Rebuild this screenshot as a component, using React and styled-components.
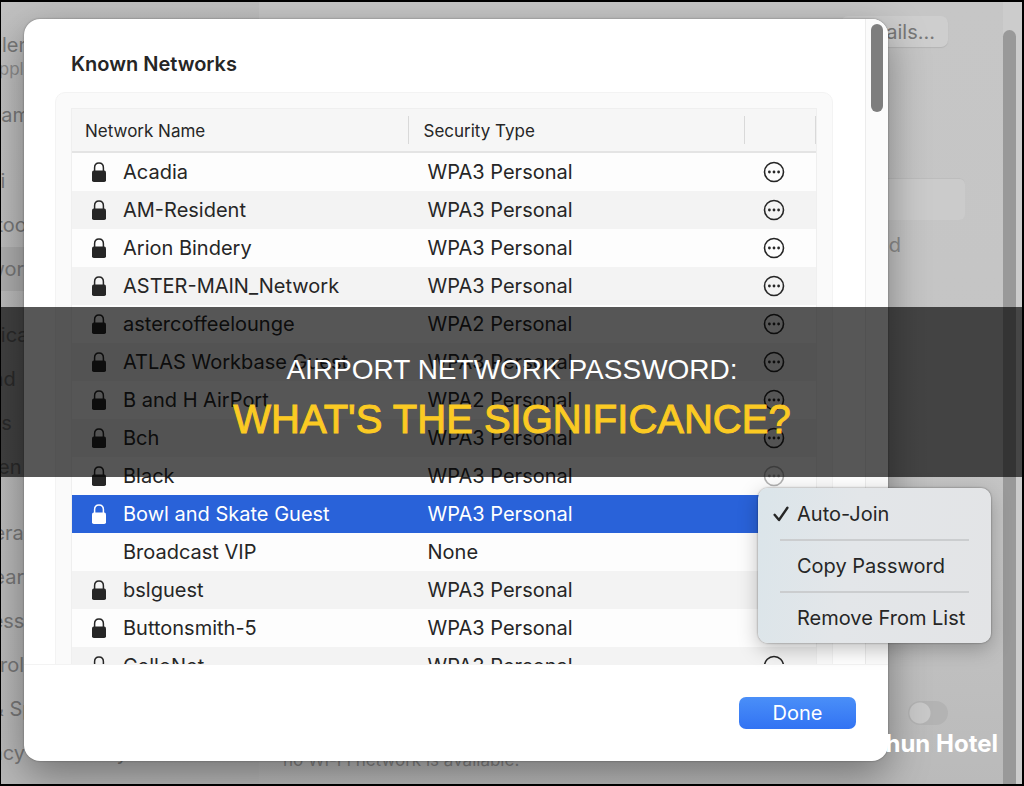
import React from "react";
import styled, { createGlobalStyle } from "styled-components";

const GlobalStyle = createGlobalStyle`
  * {
    box-sizing: border-box;
  }

  body {
    margin: 0;
    font-family: Inter, "Liberation Sans", sans-serif;
    color: #262626;
  }

  button {
    font: inherit;
    color: inherit;
    border: 0;
    padding: 0;
    background: none;
  }
`;

const Page = styled.div`
  position: relative;
  height: 100vh;
  min-height: 700px;
  overflow: hidden;
  border: 2px solid #000;
  border-width: 2px 2px 2px 1px;
  display: flex;
  background: linear-gradient(#c6c6c6, #c4c4c4 70%, #bababa);
  color: #787878;
`;

const Sidebar = styled.nav`
  width: 304px;
  margin-left: -46px;
  flex: none;
  display: flex;
  flex-direction: column;
  background: linear-gradient(#c0c0c0, #bababa 50%, #b8b8b8);
`;

const Account = styled.div`
  flex: none;
  height: 157px;
  padding: 30px 0 0 32px;
  font-size: 20px;
  line-height: 26px;

  small {
    display: block;
    font-size: 17px;
    line-height: 22px;
    color: #8c8c8c;
  }

  p {
    margin: 22px 0 0 3px;
  }
`;

const NavGroup = styled.div`
  flex: none;
  display: flex;
  flex-direction: column;
  margin-bottom: 22px;
`;

const NavLink = styled.a`
  height: 44px;
  line-height: 44px;
  font-size: 20px;
  color: inherit;
  text-decoration: none;
  white-space: nowrap;
  background: ${({ $active }) => ($active ? "#aeaeae" : "none")};
`;

const Settings = styled.main`
  flex: 1;
  display: flex;
  flex-direction: column;
  align-items: flex-end;
  padding: 14px 38px 12px 24px;
  font-size: 20px;
`;

const DetailsButton = styled.button`
  height: 31px;
  padding: 0 13px;
  border-radius: 7px;
  background: #cecece;
  box-shadow: 0 1px 1px #b4b4b4;
  margin-right: 17px;
`;

const NetworkField = styled.div`
  width: 100%;
  height: 42px;
  margin-top: 131px;
  border-radius: 6px;
  background: #cbcbcb;
  border-top: 1px solid #bdbdbd;
`;

const Hint = styled.p`
  margin: 12px 64px 0 0;
  line-height: 26px;
  color: #8c8c8c;
`;

const ToggleInput = styled.input`
  appearance: none;
  width: 40px;
  height: 24px;
  margin: auto 17px 0 0;
  border-radius: 12px;
  background: radial-gradient(circle at 12px 12px, #c9c9c9 10px, #b3b3b3 11px);
`;

const Status = styled.p`
  width: 100%;
  margin: 23px 0 0;
  font-size: 17px;
  line-height: 24px;
  color: #858585;
`;

const PageScroll = styled.div`
  width: 19px;
  flex: none;
  padding: 28px 6px 0 0;
  background: #cccccc;

  &::before {
    content: "";
    display: block;
    height: 100%;
    border-radius: 7px 7px 0 0;
    background: #999999;
  }
`;

const Sheet = styled.section`
  position: absolute;
  top: 17px;
  left: 23px;
  right: 134px;
  bottom: 23px;
  display: flex;
  flex-direction: column;
  border-radius: 16px;
  background: #fff;
  color: #262626;
  box-shadow: 0 0 2px rgba(0, 0, 0, 0.4), 0 14px 40px rgba(0, 0, 0, 0.38);
`;

const SheetBody = styled.div`
  flex: 1;
  min-height: 0;
  display: flex;
  overflow: hidden;
  border-radius: 16px 16px 0 0;
  border-bottom: 1px solid #f3f3f3;
`;

const SheetContent = styled.div`
  flex: 1;
  padding: 32px 32px 0 31px;
`;

const Heading = styled.h2`
  margin: 0 16px 15px;
  font-size: 20px;
  line-height: 26px;
  font-weight: 600;
`;

const Card = styled.div`
  padding: 16px;
  border: 1px solid #f3f3f3;
  border-radius: 10px;
  background: #fafafa;
`;

const Table = styled.table`
  width: 100%;
  table-layout: fixed;
  border-collapse: separate;
  border-spacing: 0;
  text-align: left;
  font-size: 20px;
  outline: 1px solid #efefef;
`;

const HeadCell = styled.th`
  width: ${({ $width }) => $width || "auto"};
  height: 44px;
  padding: 2px 0 0 ${({ $indent }) => $indent || "0"};
  font-size: 17px;
  font-weight: 400;
  border-bottom: 2px solid #e4e4e4;
  background: linear-gradient(#d9d9d9, #d9d9d9) right center / 1px 28px
    no-repeat #f6f6f6;
`;

const Row = styled.tr`
  height: 38px;
  color: ${({ $selected }) => ($selected ? "#fff" : "inherit")};
  background: ${({ $selected }) => ($selected ? "#2962d9" : "#fdfdfd")};

  &:nth-child(even) {
    background: ${({ $selected }) => ($selected ? "#2962d9" : "#f3f3f3")};
  }
`;

const Cell = styled.td`
  padding: 0 0 0 ${({ $indent }) => $indent};
  white-space: nowrap;
`;

const NetworkName = styled.div`
  display: grid;
  grid-template-columns: 14px auto;
  column-gap: 17px;
  align-items: center;
  justify-content: start;

  span {
    grid-column: 2;
  }
`;

const MoreButton = styled.button`
  display: block;
  height: 22px;
  opacity: ${({ $faded }) => ($faded ? 0.35 : 1)};
`;

const SheetScroll = styled.div`
  width: 23px;
  flex: none;
  padding: 5px 5px 0;
  border-left: 1px solid #ececec;
  background: #fbfbfb;

  &::before {
    content: "";
    display: block;
    height: 88px;
    border-radius: 6px;
    background: #7e7e7e;
  }
`;

const SheetFooter = styled.footer`
  height: 96px;
  flex: none;
  display: flex;
  justify-content: flex-end;
  align-items: center;
  padding: 0 32px;
`;

const DoneButton = styled.button`
  width: 117px;
  height: 32px;
  border-radius: 7px;
  font-size: 20px;
  color: #fff;
  background: linear-gradient(#4a8ff8, #3273f3);
`;

const Menu = styled.div`
  position: absolute;
  top: 469px;
  right: -103px;
  width: 233px;
  padding-top: 1px;
  border-radius: 10px;
  background: linear-gradient(100deg, #dbe5ea, #e3e6e9 40%, #e3e4e6);
  box-shadow: 0 0 2px rgba(0, 0, 0, 0.5), 0 6px 20px rgba(0, 0, 0, 0.25);
  font-size: 20px;
`;

const MenuItem = styled.button`
  display: grid;
  grid-template-columns: 16px auto;
  column-gap: 8px;
  align-items: center;
  justify-content: start;
  width: 100%;
  height: 50px;
  padding-left: 15px;

  span {
    grid-column: 2;
  }
`;

const Separator = styled.hr`
  height: 2px;
  margin: 0 22px;
  border: 0;
  background: #cbcdcf;
`;

const Banner = styled.header`
  position: absolute;
  top: 305px;
  left: -1px;
  right: -2px;
  height: 170px;
  padding-top: 45px;
  text-align: center;
  font-family: "Liberation Sans", Arial, sans-serif;
  background: rgba(0, 0, 0, 0.66);
  color: #fff;
`;

const BannerLead = styled.p`
  margin: 0;
  font-size: 28px;
  line-height: 36px;
`;

const BannerTitle = styled.h1`
  margin: 7px 0 0;
  font-size: 40px;
  line-height: 48px;
  font-weight: 400;
  color: #fbca23;
  -webkit-text-stroke: 1px #fbca23;
`;

const Watermark = styled.p`
  position: absolute;
  right: 24px;
  bottom: 24px;
  margin: 0;
  font-size: 24px;
  line-height: 32px;
  font-weight: 700;
  color: #fff;
`;

const LockIcon = () => (
  <svg width="14" height="20" viewBox="0 0 14 20" aria-hidden="true">
    <path
      d="M2.6 9.5V5.8C2.6 2.9 4.3 1 7 1s4.4 1.9 4.4 4.8v3.7"
      fill="none"
      stroke="currentColor"
      strokeWidth="1.5"
    />
    <rect y="8.6" width="14" height="11.4" rx="1.8" fill="currentColor" />
  </svg>
);

const MoreIcon = () => (
  <svg width="22" height="22" viewBox="0 0 22 22" aria-hidden="true">
    <circle
      cx="11"
      cy="11"
      r="9.5"
      fill="none"
      stroke="currentColor"
      strokeWidth="1.6"
    />
    <circle cx="6.4" cy="11" r="1.4" fill="currentColor" />
    <circle cx="11" cy="11" r="1.4" fill="currentColor" />
    <circle cx="15.6" cy="11" r="1.4" fill="currentColor" />
  </svg>
);

const CheckIcon = () => (
  <svg width="16" height="16" viewBox="0 0 16 16" aria-hidden="true">
    <path
      d="M1.6 8.8 6 14 14.4 1.8"
      fill="none"
      stroke="currentColor"
      strokeWidth="2.4"
      strokeLinecap="round"
      strokeLinejoin="round"
    />
  </svg>
);

const networks = [
  { name: "Acadia", security: "WPA3 Personal" },
  { name: "AM-Resident", security: "WPA3 Personal" },
  { name: "Arion Bindery", security: "WPA3 Personal" },
  { name: "ASTER-MAIN_Network", security: "WPA3 Personal" },
  { name: "astercoffeelounge", security: "WPA2 Personal" },
  { name: "ATLAS Workbase Guest", security: "WPA3 Personal" },
  { name: "B and H AirPort", security: "WPA2 Personal" },
  { name: "Bch", security: "WPA3 Personal" },
  { name: "Black", security: "WPA3 Personal", faded: true },
  { name: "Bowl and Skate Guest", security: "WPA3 Personal", selected: true },
  { name: "Broadcast VIP", security: "None" },
  { name: "bslguest", security: "WPA3 Personal" },
  { name: "Buttonsmith-5", security: "WPA3 Personal" },
  { name: "CelloNet", security: "WPA3 Personal" },
];

const activeItem = "Network";

const navGroups = [
  ["Wi-Fi", "Bluetooth", "Network"],
  ["Notifications", "Sound", "Focus", "Screen Time"],
  [
    "General",
    "Appearance",
    "Accessibility",
    "Control Center",
    "Siri & Spotlight",
    "Privacy & Security",
  ],
];

const NetworkRow = ({ network }) => {
  const { name, security, selected, faded } = network;

  return (
    <Row $selected={selected}>
      <Cell $indent="20px">
        <NetworkName>
          {security !== "None" && <LockIcon />}
          <span>{name}</span>
        </NetworkName>
      </Cell>
      <Cell $indent="19px">{security}</Cell>
      <Cell $indent="18px">
        <MoreButton type="button" $faded={faded} aria-label={`Options, ${name}`}>
          <MoreIcon />
        </MoreButton>
      </Cell>
    </Row>
  );
};

const KnownNetworks = () => (
  <Sheet>
    <SheetBody>
      <SheetContent>
        <Heading>Known Networks</Heading>
        <Card>
          <Table>
            <thead>
              <tr>
                <HeadCell $indent="13px">Network Name</HeadCell>
                <HeadCell $indent="15px">Security Type</HeadCell>
                <HeadCell $width="71px" />
              </tr>
            </thead>
            <tbody>
              {networks.map((network) => (
                <NetworkRow key={network.name} network={network} />
              ))}
            </tbody>
          </Table>
        </Card>
      </SheetContent>
      <SheetScroll />
    </SheetBody>
    <SheetFooter>
      <DoneButton type="button">Done</DoneButton>
    </SheetFooter>
    <Menu>
      <MenuItem type="button">
        <CheckIcon />
        <span>Auto-Join</span>
      </MenuItem>
      <Separator />
      <MenuItem type="button">
        <span>Copy Password</span>
      </MenuItem>
      <Separator />
      <MenuItem type="button">
        <span>Remove From List</span>
      </MenuItem>
    </Menu>
  </Sheet>
);

const App = () => {
  return (
    <>
      <GlobalStyle />
      <Page>
        <Sidebar>
          <Account>
            Glenn
            <small>Apple ID</small>
            <p>Family</p>
          </Account>
          {navGroups.map((group, idx) => (
            <NavGroup key={`group-${idx}`}>
              {group.map((label) => (
                <NavLink key={label} href="#" $active={label === activeItem}>
                  {label}
                </NavLink>
              ))}
            </NavGroup>
          ))}
        </Sidebar>
        <Settings>
          <DetailsButton type="button">Details...</DetailsButton>
          <NetworkField />
          <Hint>d</Hint>
          <ToggleInput type="checkbox" aria-label="Wi-Fi" />
          <Status>no Wi-Fi network is available.</Status>
        </Settings>
        <PageScroll />
        <KnownNetworks />
        <Banner>
          <BannerLead>AIRPORT NETWORK PASSWORD:</BannerLead>
          <BannerTitle>WHAT'S THE SIGNIFICANCE?</BannerTitle>
        </Banner>
        <Watermark>hun Hotel</Watermark>
      </Page>
    </>
  );
};

export default App;
